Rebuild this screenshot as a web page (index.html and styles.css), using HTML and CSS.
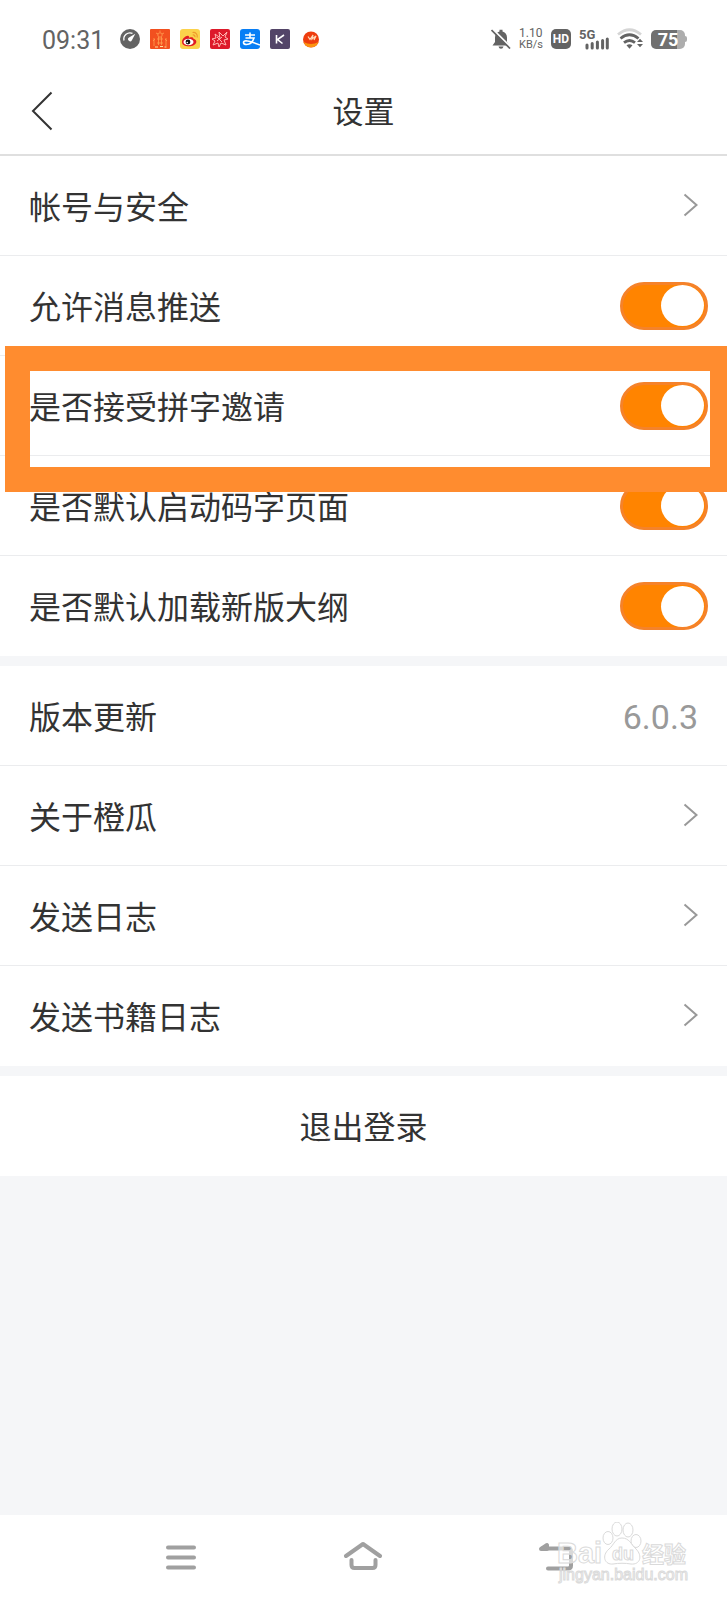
FILE: index.html
```html
<!DOCTYPE html>
<html lang="zh-CN">
<head>
<meta charset="utf-8">
<meta name="viewport" content="width=device-width, initial-scale=1">
<title>设置</title>
<link rel="stylesheet" href="styles.css">
</head>
<body>
<div class="screen">
  <div class="status">
    <span class="clock">09:31</span>
    <div class="apps">
      <svg viewBox="0 0 20 20"><circle cx="10" cy="10" r="10" fill="#636363"/><path d="M4 11.500A6.200 6.200 0 0 1 12.500 4.400" fill="none" stroke="#fff" stroke-width="1.300"/><path d="M15.300 4.800 11.900 11.200A2 2 0 1 1 9 8.600Z" fill="#fff"/></svg>
      <svg viewBox="0 0 20 20"><rect width="20" height="20" rx="1" fill="#f2501f"/><g fill="none" stroke="#ffa052" stroke-width=".8"><circle cx="10" cy="6" r="2.200"/><path d="M10 1.500v2M6 4l2 1M14 4l-2 1M8.500 8v8M11.500 8v8M7 10h6M4 9v8M16 9v8M3 12l2-2M17 12l-2-2M7 14h6"/></g><path d="M5 18h3M10 17.500h3M14.500 18h2" stroke="#ffe0a0" stroke-width="1.200"/></svg>
      <svg viewBox="0 0 20 20"><rect width="20" height="20" rx="3" fill="#fbd24b"/><path d="M2 13C2 9.500 6.500 6 8.500 7c1 .5.6 1.800.6 1.800S13 7.300 13.500 9.800c2.500.8 3 2.200 2.800 3.200-.5 5.500-14.300 6-14.300 0Z" fill="#e01c22"/><ellipse cx="8.500" cy="13" rx="5" ry="3.300" fill="#fff"/><circle cx="8" cy="13" r="2.400" fill="#111"/><circle cx="7.300" cy="13.500" r=".8" fill="#fff"/><path d="M12.500 3.500c3-.7 5.500 2 4.700 5M12.700 6c1.500-.3 2.500.8 2.200 2.200" fill="none" stroke="#ee9a2c" stroke-width="1.200"/></svg>
      <svg viewBox="0 0 20 20"><rect width="20" height="20" rx="2" fill="#dd1a2a"/><g fill="none" stroke="#ffb8b2" stroke-width="1"><path d="M10 10 9 3l4 4 4-4-2 5 3 2-4 1 2 5-5-2-2 4-1-4-5 2 2-4-3-2 4-1-1-4 4 3"/><path d="m7 8 5 5M12 8l-5 4"/></g></svg>
      <svg viewBox="0 0 20 20"><rect width="20" height="20" rx="3" fill="#087ef5"/><path d="M5 6h10M10 3.500v5M5.500 9h8.500c-1.300 4-4 6.500-7.500 6.500-3.800 0-4-3.700-.5-3.800 3.500 0 7 2.200 14 4.300" fill="none" stroke="#fff" stroke-width="1.600"/></svg>
      <svg viewBox="0 0 20 20"><rect width="20" height="20" rx="2" fill="#534568"/><path d="M6.500 6v8.500M14 6l-6.500 4.500 5 4" fill="none" stroke="#fff" stroke-width="1.600"/></svg>
      <svg viewBox="0 0 20 20"><circle cx="11" cy="10.500" r="8" fill="#ee3d0e"/><path d="M3.500 13a8 8 0 0 0 15 0Q11 17 3.500 13" fill="#fb9410"/><path d="m8 7.500 2 3L13 6l-1 4 4-3-2 4" fill="none" stroke="#ffd9b8" stroke-width="1.200"/></svg>
    </div>
    <div class="signals">
      <svg class="bell" viewBox="0 0 20 20"><path d="M1.500 16.500 4 13V8.500C4 5 6 3 8.500 2.400V.8h3v1.600C14 3 16 5 16 8.500V13l2.500 3.500ZM7.500 17.500h5q-.5 2.200-2.500 2.200t-2.500-2.200Z" fill="#636363"/><path d="M1.500 0 20 18.500" stroke="#fff" stroke-width="2"/><path d="M.5 1 19 19.500" stroke="#636363" stroke-width="1.700"/></svg>
      <span class="speed"><span class="rate">1.10</span><span>KB/s</span></span>
      <span class="hd">HD</span>
      <svg class="cell" viewBox="0 0 30 22"><text x="0" y="11" class="cell-label">5G</text><path d="M8 17v3M13.200 15.500v4.500M18.400 14v6M23.600 12.500v7.500M28.300 11v9" stroke="#636363" stroke-width="3" stroke-linecap="round"/></svg>
      <svg class="wifi" viewBox="0 0 26 22"><g fill="none" stroke="#636363" stroke-width="2.800"><path d="M1 6.500Q12.500-3 24 6.500" stroke="#d5d5d5"/><path d="M3.500 10.500q9-7.500 18 0"/><path d="M7 14.700q5.500-4.500 11 0"/></g><path d="M9.500 17.300q3-2 6 0l-3 3.400ZM20 14l3-3.300 3 3.300ZM20 16l3 3.300 3-3.300Z" fill="#636363"/></svg>
      <span class="battery">75</span>
    </div>
  </div>

  <header class="header">
    <button class="back" type="button" aria-label="返回"><svg viewBox="0 0 22 40"><path d="M20.500 1.500 2 20l18.500 18.500" fill="none" stroke="#333" stroke-width="2"/></svg></button>
    <h1 class="title">设置</h1>
  </header>

  <main class="content">
    <section class="group">
      <a class="row" href="#account"><span class="name">帐号与安全</span><svg class="arrow" viewBox="0 0 15 24"><path d="m1.500 1.500 12 10.500-12 10.500"/></svg></a>
      <label class="row"><span class="name">允许消息推送</span><input class="switch" type="checkbox" checked></label>
      <label class="row marked"><span class="name">是否接受拼字邀请</span><input class="switch" type="checkbox" checked></label>
      <label class="row"><span class="name">是否默认启动码字页面</span><input class="switch" type="checkbox" checked></label>
      <label class="row"><span class="name">是否默认加载新版大纲</span><input class="switch" type="checkbox" checked></label>
    </section>
    <section class="group">
      <div class="row"><span class="name">版本更新</span><span class="version">6.0.3</span></div>
      <a class="row" href="#about"><span class="name">关于橙瓜</span><svg class="arrow" viewBox="0 0 15 24"><path d="m1.500 1.500 12 10.500-12 10.500"/></svg></a>
      <a class="row" href="#log"><span class="name">发送日志</span><svg class="arrow" viewBox="0 0 15 24"><path d="m1.500 1.500 12 10.500-12 10.500"/></svg></a>
      <a class="row" href="#booklog"><span class="name">发送书籍日志</span><svg class="arrow" viewBox="0 0 15 24"><path d="m1.500 1.500 12 10.500-12 10.500"/></svg></a>
    </section>
    <section class="group">
      <button class="row logout" type="button"><span class="name">退出登录</span></button>
    </section>
  </main>

  <nav class="nav">
    <button type="button" aria-label="菜单"><svg viewBox="0 0 60 32"><path d="M17 5.500h26M17 15.500h26M17 25.500h26"/></svg></button>
    <button type="button" aria-label="主页"><svg viewBox="0 0 60 32"><path d="M13 14 30 2l17 12M18.500 18v5q0 3 3 3h18q3 0 3-3v-5"/></svg></button>
    <button type="button" aria-label="返回上一页"><svg viewBox="0 0 60 32"><path d="M26 6.500h26q3 0 3 3v14q0 3-3 3H32"/><path class="tip" d="m25 7 6-4v4Z"/></svg></button>
    <svg class="watermark" viewBox="0 0 134 68">
      <g transform="translate(20 -2)"><ellipse cx="32" cy="18" rx="5" ry="6.500"/><ellipse cx="41" cy="9" rx="5" ry="7"/><ellipse cx="52" cy="10" rx="5" ry="7"/><ellipse cx="60" cy="21" rx="5" ry="6.500"/><path d="M46 18c-7 0-8 7-13 11-8 7-4 16 4 15 6-1 12-1 18 0 9 1 12-8 5-15-5-5-7-11-14-11Z"/></g>
      <text x="1" y="41" class="mark-latin">Bai</text>
      <text x="56" y="38" class="mark-du">du</text>
      <text x="86" y="40" class="mark-cjk">经验</text>
      <text x="3" y="58" class="mark-url">jingyan.baidu.com</text>
    </svg>
  </nav>
</div>
</body>
</html>
```
FILE: styles.css
```css
*,
*::before,
*::after {
  box-sizing: border-box;
}

body {
  margin: 0;
  color: #333;
  background: #f5f6f8;
  font-family: Roboto, "Noto Sans CJK SC", sans-serif;
}

button {
  border: 0;
  padding: 0;
  background: none;
  color: inherit;
  font: inherit;
}

.screen {
  display: flex;
  flex-direction: column;
  min-height: 100vh;
  overflow: hidden;
}

.status {
  display: flex;
  align-items: center;
  height: 70px;
  padding: 8px 40px 0 42px;
  background: #fff;
  color: #636363;
}

.clock {
  padding-top: 4px;
  font-size: 25px;
  line-height: 32px;
}

.apps {
  display: flex;
  gap: 10px;
  margin-left: 16px;
}

.apps svg {
  width: 20px;
  height: 20px;
}

.signals {
  display: flex;
  align-items: center;
  gap: 8px;
  margin-left: auto;
}

.bell {
  width: 20px;
  height: 20px;
}

.speed {
  display: flex;
  flex-direction: column;
  font-size: 11px;
  line-height: 11px;
}

.rate {
  font-size: 12px;
}

.hd {
  width: 20px;
  border-radius: 5px;
  background: #636363;
  color: #fff;
  font-size: 12px;
  font-weight: 700;
  line-height: 20px;
  text-align: center;
}

.cell {
  width: 30px;
  height: 22px;
  overflow: visible;
}

.cell-label {
  fill: #636363;
  font-size: 13px;
  font-weight: 700;
}

.wifi {
  width: 26px;
  height: 22px;
}

.battery {
  position: relative;
  width: 34px;
  margin-right: 2px;
  border-radius: 5px;
  background: linear-gradient(90deg, #707070 75%, #adadad 75%);
  color: #fff;
  font-size: 18px;
  font-weight: 700;
  line-height: 19px;
  text-align: center;
}

.battery::after {
  content: "";
  position: absolute;
  left: 100%;
  top: 6px;
  width: 2px;
  height: 6px;
  border-radius: 0 2px 2px 0;
  background: #adadad;
}

.header {
  display: grid;
  grid-template-columns: 1fr auto 1fr;
  align-items: center;
  height: 86px;
  padding: 0 31px;
  border-bottom: 2px solid #dfdfdf;
  background: #fff;
}

.back {
  justify-self: start;
  padding-bottom: 2px;
}

.back svg {
  display: block;
  width: 22px;
  height: 40px;
}

.title {
  margin: 0;
  padding-top: 2px;
  font-size: 31px;
  font-weight: 400;
  line-height: 40px;
}

.content {
  display: flex;
  flex: 1;
  flex-direction: column;
  gap: 10px;
}

.group {
  background: #fff;
}

.row {
  position: relative;
  display: flex;
  align-items: center;
  justify-content: space-between;
  width: 100%;
  height: 100px;
  padding: 0 29px;
  border-bottom: 1px solid #ebecee;
  color: inherit;
  font-size: 32px;
  line-height: 40px;
  text-decoration: none;
}

.row:last-child {
  border-bottom: 0;
}

label.row {
  padding-right: 19px;
}

.name {
  padding-top: 4px;
}

.row.logout {
  justify-content: center;
}

.arrow {
  width: 15px;
  height: 24px;
  margin-bottom: 2px;
  fill: none;
  stroke: #999;
  stroke-width: 2;
}

.version {
  padding-top: 2px;
  color: #999;
  font-size: 34px;
}

.switch {
  appearance: none;
  display: flex;
  align-items: center;
  justify-content: flex-end;
  width: 88px;
  height: 48px;
  margin: 0;
  padding-right: 1px;
  border: 3px solid #f5822a;
  border-radius: 24px;
  background: #ff8400;
}

.switch::before {
  content: "";
  width: 43px;
  height: 41px;
  border-radius: 50%;
  background: #fff;
}

.switch:not(:checked) {
  justify-content: flex-start;
  border-color: #ccc;
  background: #ccc;
}

.marked::after {
  content: "";
  position: absolute;
  z-index: 1;
  top: -10px;
  right: -8px;
  left: 5px;
  height: 146px;
  border: 25px solid #ff8c2f;
  pointer-events: none;
}

.nav {
  position: relative;
  display: grid;
  grid-template-columns: repeat(3, 1fr);
  align-items: center;
  justify-items: center;
  height: 85px;
  padding: 0 90px;
  background: #fff;
}

.nav button svg {
  display: block;
  width: 60px;
  height: 32px;
  fill: none;
  stroke: #a0a0a0;
  stroke-width: 4;
  stroke-linecap: round;
  stroke-linejoin: round;
}

.nav .tip {
  fill: #a0a0a0;
}

.watermark {
  position: absolute;
  right: 37px;
  bottom: 10px;
  width: 134px;
  height: 68px;
  fill: #fff;
  fill-opacity: 0.6;
  stroke: #dadada;
  stroke-width: 1;
  font-family: "Liberation Sans", "Noto Sans CJK SC", sans-serif;
}

.mark-latin {
  font-size: 29px;
  font-weight: 700;
}

.mark-du {
  font-size: 18px;
  font-weight: 700;
}

.mark-cjk {
  font-size: 22px;
  font-weight: 700;
}

.mark-url {
  font-size: 16px;
}
```
